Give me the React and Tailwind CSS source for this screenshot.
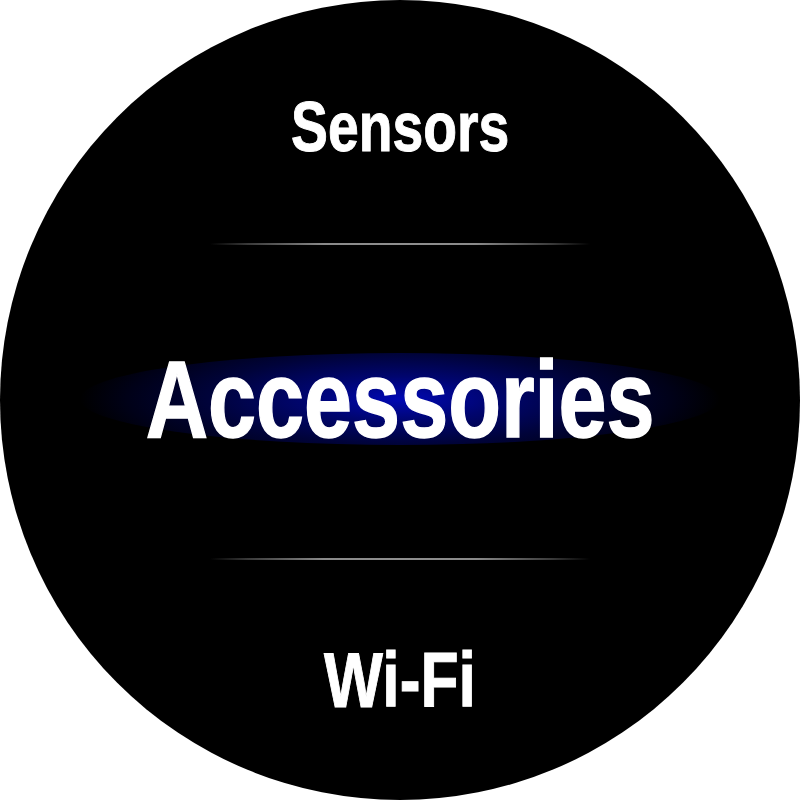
import React from "react"

const items = { prev: "Sensors", current: "Accessories", next: "Wi-Fi" }

const Divider = () => (
  <div className="w-[380px] h-[2px] bg-[linear-gradient(90deg,transparent_0%,#3a3a3a_10%,#8a8a8a_30%,#8f8f8f_50%,#8a8a8a_70%,#3a3a3a_90%,transparent_100%)]" />
)

const App = () => {
  return (
    <div className="w-[800px] h-[800px] bg-white font-['Liberation_Sans',sans-serif]">
      <div className="w-[800px] h-[800px] rounded-full bg-black flex flex-col items-center text-white overflow-hidden">
        {/* previous item */}
        <div className="h-[243px] w-full flex items-center justify-center pt-[10px]">
          <span className="inline-block scale-x-[0.79] text-[70px] font-bold leading-none [-webkit-text-stroke:1px_white]">{items.prev}</span>
        </div>

        <Divider />

        {/* selected item with glow */}
        <div className="h-[313px] w-full flex items-center justify-center pb-[6px]">
          <div className="w-[640px] h-[92px] rounded-[50%] flex items-center justify-center bg-[radial-gradient(ellipse_320px_75px_at_center,#0008b4_0%,#00056e_30%,#00033a_60%,#000118_85%,#000000_100%)]">
            <span className="inline-block scale-x-[0.785] text-[110px] font-bold leading-none [-webkit-text-stroke:1.5px_white]">{items.current}</span>
          </div>
        </div>

        <Divider />

        {/* next item */}
        <div className="flex-1 w-full flex items-center justify-center">
          <span className="inline-block scale-x-[0.8] text-[78px] font-bold leading-none [-webkit-text-stroke:1px_white]">{items.next}</span>
        </div>
      </div>
    </div>
  )
}

export default App
